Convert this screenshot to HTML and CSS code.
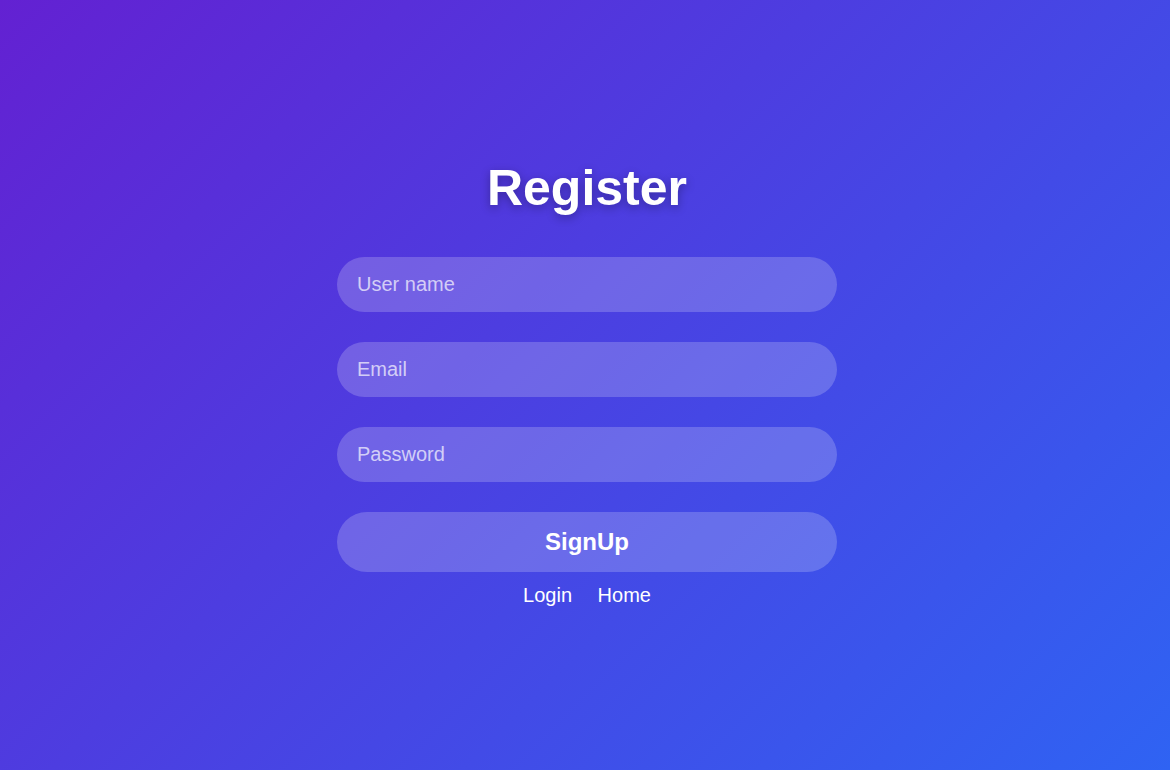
FILE: index.html
```html
<!DOCTYPE html>
<html lang="en">
<head>
<meta charset="utf-8">
<title>Register</title>
<link rel="stylesheet" href="styles.css">
</head>
<body>
<main class="page">
  <form class="register">
    <h1 class="title">Register</h1>
    <input class="field" type="text" placeholder="User name">
    <input class="field" type="email" placeholder="Email">
    <input class="field" type="password" placeholder="Password">
    <button class="submit" type="button">SignUp</button>
    <nav class="links">
      <a href="#">Login</a>
      <a href="#">Home</a>
    </nav>
  </form>
</main>
</body>
</html>
```

FILE: styles.css
```css
* { box-sizing: border-box; }
html, body { margin: 0; padding: 0; height: 100%; }
body {
  font-family: "Liberation Sans", Arial, sans-serif;
  background: linear-gradient(135deg, #6321d2 0%, #2f63f3 100%);
  color: #fff;
}
.page {
  height: 100%;
  display: flex;
  align-items: center;
  justify-content: center;
  padding: 0 0 4px 4px;
}
.register {
  width: 500px;
  display: flex;
  flex-direction: column;
  align-items: stretch;
}
.title {
  margin: 0 0 40px;
  font-size: 50px;
  line-height: 57px;
  font-weight: 700;
  text-align: center;
  text-shadow: 0 3px 10px rgba(0, 0, 0, 0.3);
}
.field {
  height: 55px;
  margin: 0 0 30px;
  padding: 0 20px;
  border: none;
  outline: none;
  border-radius: 28px;
  background: rgba(255, 255, 255, 0.2);
  color: #fff;
  font-family: inherit;
  font-size: 20px;
}
.field::placeholder { color: rgba(255, 255, 255, 0.7); }
.submit {
  height: 60px;
  border: none;
  border-radius: 30px;
  background: rgba(255, 255, 255, 0.2);
  color: #fff;
  font-family: inherit;
  font-size: 24px;
  font-weight: 700;
  cursor: pointer;
}
.links {
  margin-top: 12px;
  text-align: center;
  font-size: 20px;
  line-height: 23px;
}
.links a {
  color: #fff;
  text-decoration: none;
  margin: 0 10px;
}
```
